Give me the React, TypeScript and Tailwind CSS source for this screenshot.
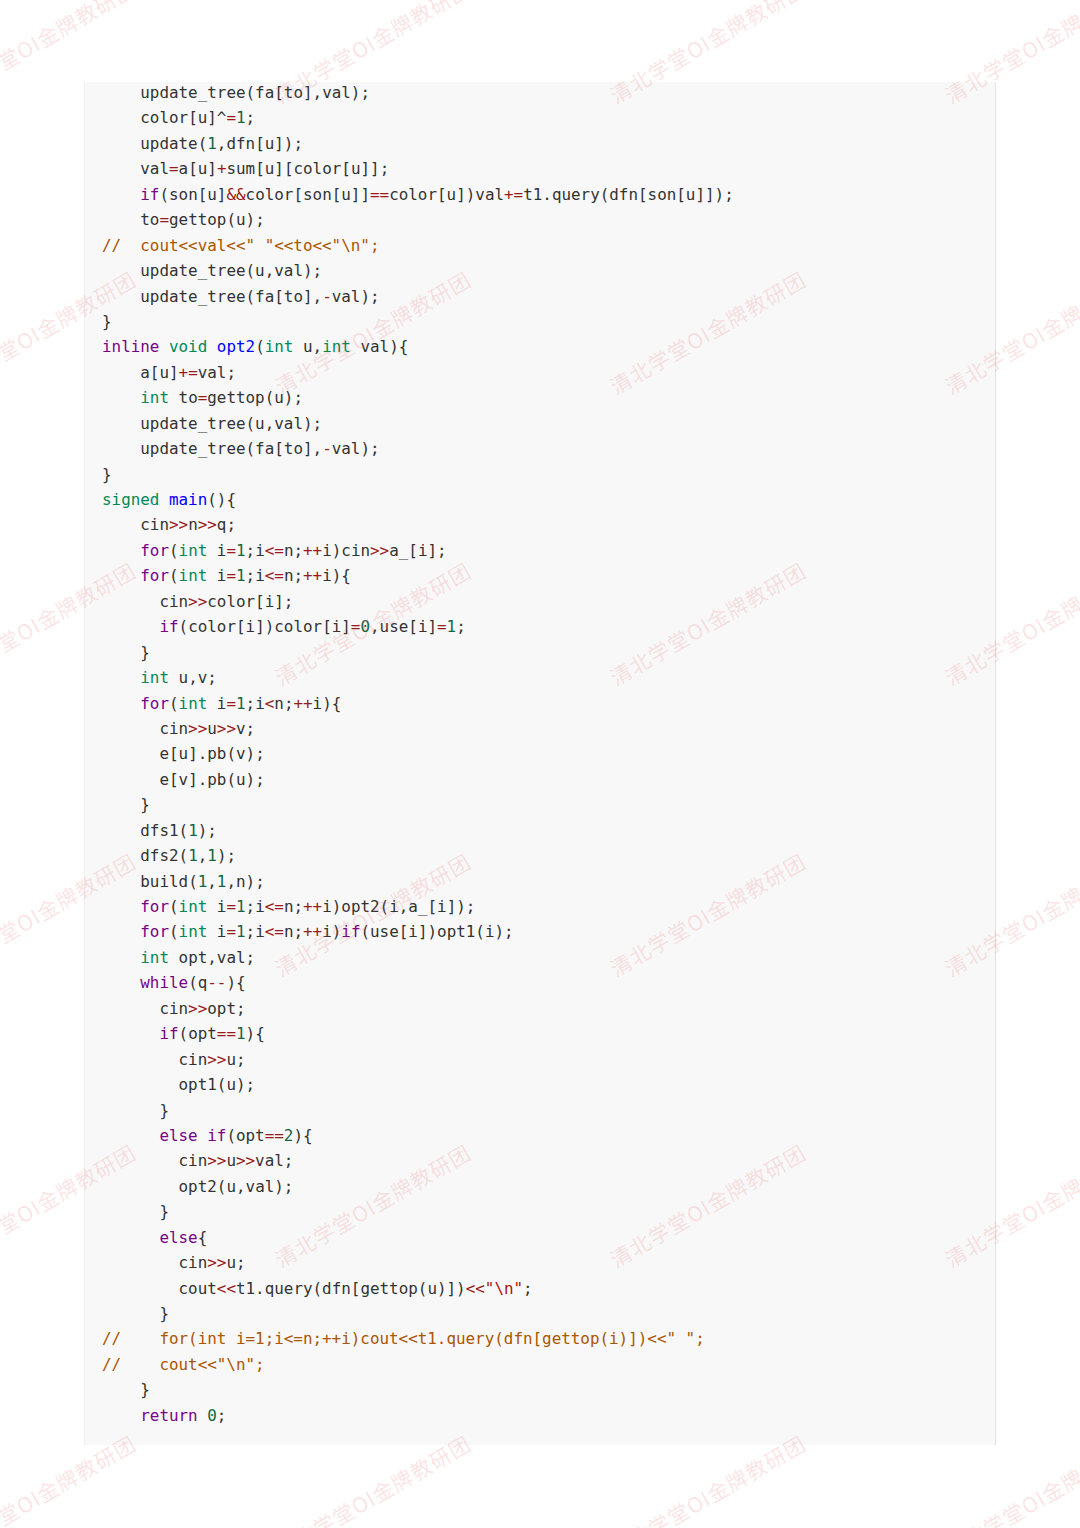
const CODE = String.raw`    update_tree(fa[to],val);
    color[u]^=1;
    update(1,dfn[u]);
    val=a[u]+sum[u][color[u]];
    if(son[u]&&color[son[u]]==color[u])val+=t1.query(dfn[son[u]]);
    to=gettop(u);
//  cout<<val<<" "<<to<<"\n";
    update_tree(u,val);
    update_tree(fa[to],-val);
}
inline void opt2(int u,int val){
    a[u]+=val;
    int to=gettop(u);
    update_tree(u,val);
    update_tree(fa[to],-val);
}
signed main(){
    cin>>n>>q;
    for(int i=1;i<=n;++i)cin>>a_[i];
    for(int i=1;i<=n;++i){
      cin>>color[i];
      if(color[i])color[i]=0,use[i]=1;
    }
    int u,v;
    for(int i=1;i<n;++i){
      cin>>u>>v;
      e[u].pb(v);
      e[v].pb(u);
    }
    dfs1(1);
    dfs2(1,1);
    build(1,1,n);
    for(int i=1;i<=n;++i)opt2(i,a_[i]);
    for(int i=1;i<=n;++i)if(use[i])opt1(i);
    int opt,val;
    while(q--){
      cin>>opt;
      if(opt==1){
        cin>>u;
        opt1(u);
      }
      else if(opt==2){
        cin>>u>>val;
        opt2(u,val);
      }
      else{
        cin>>u;
        cout<<t1.query(dfn[gettop(u)])<<"\n";
      }
//    for(int i=1;i<=n;++i)cout<<t1.query(dfn[gettop(i)])<<" ";
//    cout<<"\n";
    }
    return 0;`;

const KEYWORDS = new Set(["for", "if", "else", "while", "return", "inline"]);
const TYPES = new Set(["int", "void", "signed"]);

type Tok = { text: string; cls: string };

// rough cpp highlighter, same colours as the codemirror default theme
function tokenize(line: string): Tok[] {
  const re =
    /(\/\/.*$)|("(?:\\.|[^"\\])*")|([A-Za-z_]\w*)|(\d+)|([+\-*&%=<>!?|\/]+)|(\s+)|(.)/g;
  const out: Tok[] = [];
  let prev = "";
  let m: RegExpExecArray | null;
  while ((m = re.exec(line)) !== null) {
    const t = m[0];
    let cls = "";
    if (m[1]) cls = "text-[#aa5500]";
    else if (m[2]) cls = "text-[#aa1111]";
    else if (m[3]) {
      if (KEYWORDS.has(t)) cls = "text-[#770088]";
      else if (TYPES.has(t)) cls = "text-[#008855]";
      else if (TYPES.has(prev) && line[re.lastIndex] === "(")
        cls = "text-[#0000ff]";
    } else if (m[4]) cls = "text-[#116644]";
    else if (m[5]) cls = "text-[#981a1a]";
    out.push({ text: t, cls });
    if (!m[6]) prev = t;
  }
  return out;
}

function Watermark() {
  return (
    <div className="flex items-center justify-center">
      <span className="-rotate-[30deg] whitespace-nowrap text-[21px] tracking-[1px] text-[rgba(235,80,80,0.16)] [font-family:'Noto_Sans_CJK_SC',sans-serif]">
        清北学堂OI金牌教研团
      </span>
    </div>
  );
}

export default function App() {
  const lines = CODE.split("\n");

  return (
    <div className="relative h-[1528px] w-full overflow-hidden bg-white">
      <div className="ml-[84px] mt-[82px] w-[912px] overflow-hidden border-l border-r border-l-[#efefef] border-r-[#e2e2e2] bg-[#f8f8f8] pb-[17px] pl-[17px]">
        <pre className="-mt-[2px] text-[15.9px] leading-[25.44px] text-[#333333] [font-family:'DejaVu_Sans_Mono',monospace]">
          {lines.map((line, i) => (
            <div key={i} className="whitespace-pre">
              {tokenize(line).map((t, j) => (
                <span key={j} className={t.cls}>
                  {t.text}
                </span>
              ))}
              {line.length === 0 && " "}
            </div>
          ))}
        </pre>
      </div>

      <div className="pointer-events-none absolute left-[-130px] top-[-104px] grid grid-cols-[repeat(4,335px)] auto-rows-[291px]">
        {Array.from({ length: 24 }).map((_, i) => (
          <Watermark key={i} />
        ))}
      </div>
    </div>
  );
}
